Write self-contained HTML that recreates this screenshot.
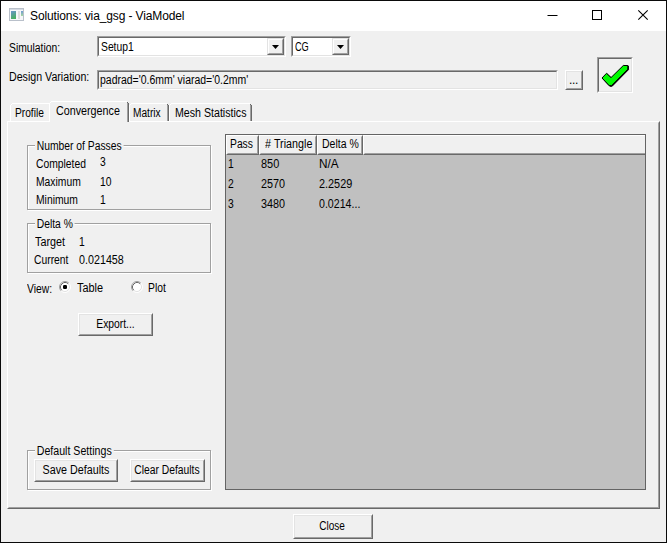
<!DOCTYPE html>
<html>
<head>
<meta charset="utf-8">
<title>Solutions: via_gsg - ViaModel</title>
<style>
html,body{margin:0;padding:0;}
body{width:667px;height:543px;overflow:hidden;background:#f0f0f0;font-family:"Liberation Sans",sans-serif;font-size:11px;color:#000;position:relative;}
.abs{position:absolute;}
.t{position:absolute;white-space:nowrap;font-size:12px;line-height:14px;transform:scaleX(.86);transform-origin:0 50%;}
#win{position:absolute;left:0;top:0;width:665px;height:541px;border:1px solid #0a0a0a;background:#f0f0f0;}
#titlebar{position:absolute;left:1px;top:1px;width:665px;height:30px;background:#fff;}
#title{position:absolute;left:29px;top:8px;font-size:12px;line-height:15px;white-space:nowrap;letter-spacing:-0.12px;}
.sunken{position:absolute;box-sizing:border-box;border:1px solid;border-color:#a0a0a0 #fff #fff #a0a0a0;}
.sunken>i{position:absolute;left:0;top:0;right:0;bottom:0;border:1px solid;border-color:#696969 #e3e3e3 #e3e3e3 #696969;display:block;}
.btn{position:absolute;box-sizing:border-box;border:1px solid;border-color:#fff #696969 #696969 #fff;background:#f0f0f0;}
.btn>i{position:absolute;left:0;top:0;right:0;bottom:0;border:1px solid;border-color:#e3e3e3 #a0a0a0 #a0a0a0 #e3e3e3;display:block;}
.btn.sb{border-color:#e3e3e3 #696969 #696969 #e3e3e3;}
.btn.sb>i{border-color:#fff #a0a0a0 #a0a0a0 #fff;}
.btn>span{position:absolute;left:0;right:0;text-align:center;white-space:nowrap;font-size:12px;line-height:14px;transform:scaleX(.86);}
.grp{position:absolute;box-sizing:border-box;border:1px solid #a0a0a0;box-shadow:1px 1px 0 #fff, inset 1px 1px 0 #fff;}
.grp>b{position:absolute;top:-7px;left:7px;background:#f0f0f0;padding:0 2px;font-weight:normal;font-size:12px;line-height:14px;white-space:nowrap;transform:scaleX(.86);transform-origin:0 50%;}
.tab{position:absolute;box-sizing:border-box;border-top:1px solid #fff;border-left:1px solid #fff;border-right:1px solid #696969;background:#f0f0f0;}
.tab>u{position:absolute;right:0;top:1px;bottom:0;width:1px;background:#a0a0a0;}
.tab>span{position:absolute;left:-10px;right:-10px;text-align:center;white-space:nowrap;font-size:12px;line-height:14px;transform:scaleX(.86);}
.hdr{position:absolute;top:0;height:20px;box-sizing:border-box;border:1px solid;border-color:#fff #696969 #696969 #fff;background:#f0f0f0;}
.hdr>i{position:absolute;left:0;top:0;right:0;bottom:0;border:1px solid;border-color:#f0f0f0 #a0a0a0 #a0a0a0 #f0f0f0;display:block;}
.hdr>span{position:absolute;left:5px;top:2px;white-space:nowrap;font-size:12px;line-height:14px;transform:scaleX(.86);transform-origin:0 50%;}
.radio{position:absolute;width:12px;height:12px;}
</style>
</head>
<body>
<div id="win"></div>
<div id="titlebar">
  <svg class="abs" style="left:8px;top:7px" width="15" height="13" viewBox="0 0 15 13">
    <defs><linearGradient id="g1" x1="0" y1="0" x2="0.3" y2="1"><stop offset="0" stop-color="#6a94cc"/><stop offset="1" stop-color="#48ae62"/></linearGradient>
    <linearGradient id="g2" x1="0" y1="0" x2="0" y2="1"><stop offset="0" stop-color="#6f9ad4"/><stop offset="1" stop-color="#a5d8a0"/></linearGradient></defs>
    <rect x="0.5" y="0.5" width="14" height="12" fill="#f6f7f9" stroke="#b9c0ca"/>
    <rect x="1" y="1" width="13" height="1" fill="#d5dae2"/>
    <rect x="2" y="3" width="5" height="8" fill="url(#g1)"/>
    <rect x="9" y="3" width="2" height="8" fill="#dedede"/>
    <rect x="12" y="3" width="2" height="5" fill="url(#g2)"/>
  </svg>
  <div id="title">Solutions: via_gsg - ViaModel</div>
  <svg class="abs" style="left:540px;top:0" width="125" height="30" viewBox="0 0 125 30">
    <path d="M6.5 14.5h10" stroke="#000" stroke-width="1" fill="none"/>
    <rect x="51.5" y="9.5" width="9" height="9" stroke="#000" stroke-width="1" fill="none"/>
    <path d="M97.3 9.3l9.4 9.4M106.7 9.3l-9.4 9.4" stroke="#000" stroke-width="1.1" fill="none"/>
  </svg>
</div>

<!-- Row 1 -->
<div class="t" style="left:9px;top:41px">Simulation:</div>
<div class="sunken" style="left:97px;top:36px;width:189px;height:21px;background:#fff"><i></i>
  <div class="t" style="left:3px;top:3px">Setup1</div>
  <div class="btn sb" style="left:169px;top:1px;width:17px;height:17px"><i></i>
    <svg class="abs" style="left:4px;top:6px" width="7" height="4"><path d="M0 0h7l-3.5 4z" fill="#000"/></svg>
  </div>
</div>
<div class="sunken" style="left:291px;top:36px;width:60px;height:21px;background:#fff"><i></i>
  <div class="t" style="left:3px;top:3px;transform:scaleX(.77);letter-spacing:-0.3px">CG</div>
  <div class="btn sb" style="left:40px;top:1px;width:17px;height:17px"><i></i>
    <svg class="abs" style="left:4px;top:6px" width="7" height="4"><path d="M0 0h7l-3.5 4z" fill="#000"/></svg>
  </div>
</div>

<!-- Row 2 -->
<div class="t" style="left:9px;top:70px;transform:scaleX(.887)">Design Variation:</div>
<div class="sunken" style="left:97px;top:70px;width:461px;height:20px;background:#f0f0f0"><i></i>
  <div class="t" style="left:1.5px;top:2px;transform:scaleX(.872)">padrad='0.6mm' viarad='0.2mm'</div>
</div>
<div class="btn" style="left:565px;top:70px;width:18px;height:20px"><i></i><span style="top:2px;left:-1px;transform:none;letter-spacing:-0.33px">...</span></div>
<div class="sunken" style="left:597px;top:57px;width:36px;height:36px"><i></i>
  <svg class="abs" style="left:-1px;top:-1px" width="36" height="36" viewBox="0 0 36 36">
    <path d="M5 21 L9.5 16.3 L14 20.6 L26.3 8.5 L30.8 8.5 L30.8 12.2 L14.6 28.6 L12.2 28.6 Z" transform="translate(0.6,0.6)" fill="#000" stroke="#000" stroke-width="1" stroke-linejoin="miter"/>
    <path d="M5 21 L9.5 16.3 L14 20.6 L26.3 8.5 L30.8 8.5 L30.8 12.2 L14.6 28.6 L12.2 28.6 Z" fill="#00fa00" stroke="#000" stroke-width="1" stroke-linejoin="miter"/>
  </svg>
</div>

<!-- Tab panel -->
<div class="abs" style="left:7px;top:121px;width:653px;height:388px;box-sizing:border-box;border:1px solid;border-color:#fff #696969 #696969 #fff;"><div class="abs" style="left:0;top:0;right:0;bottom:0;border:1px solid;border-color:#f0f0f0 #a0a0a0 #a0a0a0 #f0f0f0"></div></div>
<div class="abs" style="left:10px;top:103px;width:42px;height:18px;background:#f0f0f0">
  <div class="abs" style="left:0;top:2px;width:1px;height:16px;background:#fff"></div>
  <div class="abs" style="left:1px;top:1px;width:1px;height:1px;background:#fff"></div>
  <div class="abs" style="left:2px;top:0;width:38px;height:1px;background:#fff"></div>
  <div class="abs" style="left:40px;top:1px;width:1px;height:17px;background:#a0a0a0"></div>
  <div class="abs" style="left:41px;top:2px;width:1px;height:16px;background:#696969"></div>
  <div class="abs" style="left:40px;top:1px;width:1px;height:1px;background:#696969"></div>
  <div class="t" style="left:5px;top:3px;transform:scaleX(0.85)">Profile</div>
</div>
<div class="abs" style="left:129px;top:103px;width:40px;height:18px;background:#f0f0f0">
  <div class="abs" style="left:0;top:2px;width:1px;height:16px;background:#fff"></div>
  <div class="abs" style="left:1px;top:1px;width:1px;height:1px;background:#fff"></div>
  <div class="abs" style="left:2px;top:0;width:36px;height:1px;background:#fff"></div>
  <div class="abs" style="left:38px;top:1px;width:1px;height:17px;background:#a0a0a0"></div>
  <div class="abs" style="left:39px;top:2px;width:1px;height:16px;background:#696969"></div>
  <div class="abs" style="left:38px;top:1px;width:1px;height:1px;background:#696969"></div>
  <div class="t" style="left:3.8000000000000114px;top:3px;transform:scaleX(0.845)">Matrix</div>
</div>
<div class="abs" style="left:169px;top:103px;width:83px;height:18px;background:#f0f0f0">
  <div class="abs" style="left:0;top:2px;width:1px;height:16px;background:#fff"></div>
  <div class="abs" style="left:1px;top:1px;width:1px;height:1px;background:#fff"></div>
  <div class="abs" style="left:2px;top:0;width:79px;height:1px;background:#fff"></div>
  <div class="abs" style="left:81px;top:1px;width:1px;height:17px;background:#a0a0a0"></div>
  <div class="abs" style="left:82px;top:2px;width:1px;height:16px;background:#696969"></div>
  <div class="abs" style="left:81px;top:1px;width:1px;height:1px;background:#696969"></div>
  <div class="t" style="left:5.5px;top:3px;transform:scaleX(0.886)">Mesh Statistics</div>
</div>
<div class="abs" style="left:49px;top:101px;width:80px;height:22px;background:#f0f0f0">
  <div class="abs" style="left:0;top:2px;width:1px;height:19px;background:#fff"></div>
  <div class="abs" style="left:1px;top:1px;width:1px;height:1px;background:#fff"></div>
  <div class="abs" style="left:2px;top:0;width:76px;height:1px;background:#fff"></div>
  <div class="abs" style="left:78px;top:1px;width:1px;height:20px;background:#a0a0a0"></div>
  <div class="abs" style="left:79px;top:2px;width:1px;height:19px;background:#696969"></div>
  <div class="abs" style="left:78px;top:1px;width:1px;height:1px;background:#696969"></div>
  <div class="t" style="left:7.299999999999997px;top:3px;transform:scaleX(0.895)">Convergence</div>
</div>

<!-- Group: Number of Passes -->
<div class="grp" style="left:27px;top:145px;width:184px;height:65px"><b>Number of Passes</b></div>
<div class="t" style="left:36px;top:157px">Completed</div><div class="t" style="left:100px;top:155px">3</div>
<div class="t" style="left:36px;top:175px">Maximum</div><div class="t" style="left:100px;top:175px">10</div>
<div class="t" style="left:36px;top:193px">Minimum</div><div class="t" style="left:100px;top:193px">1</div>

<!-- Group: Delta % -->
<div class="grp" style="left:27px;top:223px;width:184px;height:50px"><b>Delta %</b></div>
<div class="t" style="left:34.5px;top:235px;transform:scaleX(.9)">Target</div><div class="t" style="left:78.5px;top:235px">1</div>
<div class="t" style="left:34px;top:253px">Current</div><div class="t" style="left:78.5px;top:253px;transform:scaleX(.895)">0.021458</div>

<!-- View -->
<div class="t" style="left:27px;top:282px">View:</div>
<svg class="radio" style="left:59px;top:281px" viewBox="0 0 12 12"><circle cx="6" cy="6" r="5" fill="#fff"/><path d="M2.11 9.89A5.5 5.5 0 0 1 9.89 2.11" fill="none" stroke="#a0a0a0"/><path d="M9.89 2.11A5.5 5.5 0 0 1 2.11 9.89" fill="none" stroke="#fff"/><path d="M2.82 9.18A4.5 4.5 0 0 1 9.18 2.82" fill="none" stroke="#696969"/><path d="M9.18 2.82A4.5 4.5 0 0 1 2.82 9.18" fill="none" stroke="#e3e3e3"/><rect x="4" y="4" width="4" height="4" rx="1.2" fill="#000"/></svg>
<div class="t" style="left:76.5px;top:281px;transform:scaleX(.91)">Table</div>
<svg class="radio" style="left:131px;top:281px" viewBox="0 0 12 12"><circle cx="6" cy="6" r="5" fill="#fff"/><path d="M2.11 9.89A5.5 5.5 0 0 1 9.89 2.11" fill="none" stroke="#a0a0a0"/><path d="M9.89 2.11A5.5 5.5 0 0 1 2.11 9.89" fill="none" stroke="#fff"/><path d="M2.82 9.18A4.5 4.5 0 0 1 9.18 2.82" fill="none" stroke="#696969"/><path d="M9.18 2.82A4.5 4.5 0 0 1 2.82 9.18" fill="none" stroke="#e3e3e3"/></svg>
<div class="t" style="left:148px;top:281px">Plot</div>

<div class="btn" style="left:78px;top:313px;width:75px;height:23px"><i></i><span style="top:3px">Export...</span></div>

<!-- Default Settings -->
<div class="grp" style="left:27px;top:450px;width:184px;height:40px"><b style="transform:scaleX(.885)">Default Settings</b></div>
<div class="btn" style="left:34px;top:459px;width:84px;height:23px"><i></i><span style="top:3px;transform:scaleX(.895)">Save Defaults</span></div>
<div class="btn" style="left:130px;top:459px;width:75px;height:23px"><i></i><span style="top:3px;left:-2px">Clear Defaults</span></div>

<!-- List -->
<div class="abs" style="left:225px;top:134px;width:421px;height:356px;box-sizing:border-box;border:1px solid #646464;background:#c0c0c0">
  <div class="abs" style="left:0;top:0;right:0;height:20px;background:#f0f0f0;overflow:hidden">
    <div class="hdr" style="left:0;width:33px"><i></i><span style="left:3px;top:1px">Pass</span></div>
    <div class="hdr" style="left:33px;width:58px"><i></i><span style="left:4.5px;top:1px;transform:scaleX(.895)">#&nbsp;Triangle</span></div>
    <div class="hdr" style="left:91px;width:46px"><i></i><span style="left:4px;top:1px;transform:scaleX(.875)">Delta %</span></div>
    <div class="hdr" style="left:137px;right:-3px"><i></i></div>
  </div>
  <div class="t" style="left:2px;top:22px">1</div><div class="t" style="left:35px;top:22px;transform:scaleX(.91)">850</div><div class="t" style="left:93px;top:22px;transform:scaleX(.98)">N/A</div>
  <div class="t" style="left:2px;top:42px">2</div><div class="t" style="left:35px;top:42px;transform:scaleX(.9)">2570</div><div class="t" style="left:93px;top:42px;transform:scaleX(.905)">2.2529</div>
  <div class="t" style="left:2px;top:62px">3</div><div class="t" style="left:35px;top:62px;transform:scaleX(.9)">3480</div><div class="t" style="left:93px;top:62px;transform:scaleX(.885)">0.0214...</div>
</div>

<!-- Close -->
<div class="btn" style="left:293px;top:514px;width:80px;height:25px"><i></i><span style="top:4px;left:-2px;transform:scaleX(.835)">Close</span></div>
</body>
</html>
